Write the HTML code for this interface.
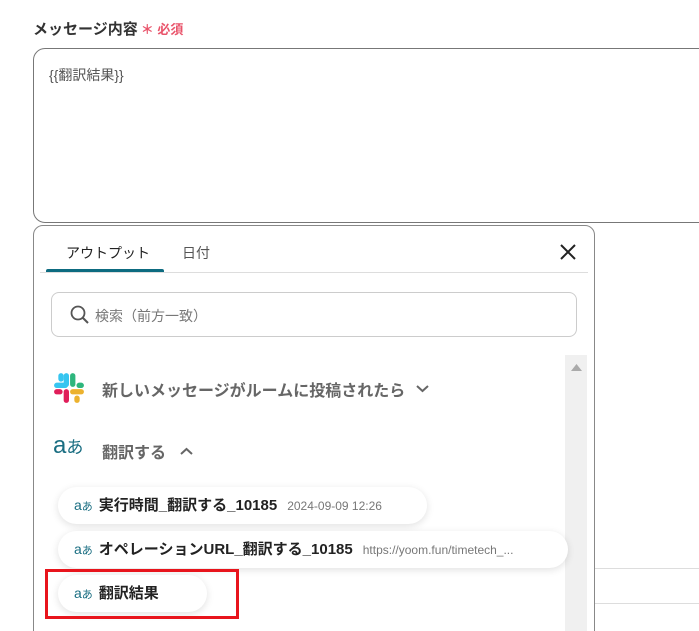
<!DOCTYPE html>
<html><head><meta charset="utf-8"><style>
*{box-sizing:border-box;margin:0;padding:0}
html,body{width:699px;height:631px;overflow:hidden}
body{background:#fff;font-family:"Liberation Sans","Noto Sans CJK JP",sans-serif;position:relative;color:#333}
.abs{position:absolute}
.lbl{left:33px;top:18px;font-size:15px;font-weight:bold;color:#333}
.lbl span{color:#e9546b;font-size:13px;margin-left:3px}
.ta{left:33px;top:48px;width:700px;height:175px;border:1px solid #777;border-radius:12px}
.ta div{position:absolute;left:15px;top:16px;font-size:14px;color:#555}
.pop{left:33px;top:225px;width:562px;height:420px;border:1px solid #888;border-radius:10px;background:#fff}
.tab{font-size:14px;top:243px}
.tl{left:46px;top:269px;width:118px;height:4px;background:#0d6b80;border-radius:2px 2px 0 0}
.div{left:40px;top:272px;width:548px;height:1px;background:#ddd}
.search{left:51px;top:292px;width:526px;height:45px;border:1px solid #ccc;border-radius:8px}
.search span{position:absolute;left:43px;top:13px;font-size:14px;color:#777}
.sb{left:565px;top:355px;width:22px;height:280px;background:#f0f0f0}
.row{font-size:16px;font-weight:bold;color:#666}
.chip{height:37px;border-radius:19px;background:#fff;box-shadow:0 2px 8px rgba(0,0,0,.12);font-size:15px;font-weight:bold;color:#222;padding-left:16px;line-height:37px;white-space:nowrap;overflow:hidden}
.ic{color:#1a6e82;font-weight:normal;font-size:14px;margin-right:6px}
.ic i{font-style:normal;font-size:11px}
.chip small{font-size:12px;color:#777;font-weight:normal;margin-left:10px}
</style></head><body>
<div class="abs lbl">メッセージ内容<span>＊ 必須</span></div>
<div class="abs ta"><div>{{翻訳結果}}</div></div>
<div class="abs" style="left:595px;top:568px;width:104px;height:1px;background:#ddd"></div>
<div class="abs" style="left:595px;top:603px;width:104px;height:1px;background:#ddd"></div>
<div class="abs pop"></div>
<div class="abs tab" style="left:66px;color:#222">アウトプット</div>
<div class="abs tab" style="left:182px;color:#555">日付</div>
<div class="abs tl"></div><div class="abs div"></div>
<svg class="abs" style="left:559px;top:243px" width="18" height="18" viewBox="0 0 18 18"><path d="M2 2L16 16M16 2L2 16" stroke="#222" stroke-width="2"/></svg>
<div class="abs search"><svg class="abs" style="left:18px;top:12px" width="20" height="20" viewBox="0 0 20 20"><circle cx="8" cy="8" r="6.5" fill="none" stroke="#555" stroke-width="1.8"/><path d="M13 13L18 18" stroke="#555" stroke-width="2"/></svg><span>検索（前方一致）</span></div>
<div class="abs sb"><svg class="abs" style="left:6px;top:9px" width="11" height="7"><path d="M0 7L5.5 0L11 7Z" fill="#aaa"/></svg></div>
<svg class="abs" style="left:53px;top:372px" width="32" height="32" viewBox="0 0 30 30">
<rect x="1" y="10" width="13" height="5" rx="2.5" fill="#36c5f0"/><rect x="5" y="1" width="5" height="8" rx="2.5" fill="#36c5f0"/>
<rect x="10" y="1" width="5" height="13" rx="2.5" fill="#36c5f0"/>
<rect x="16" y="1" width="5" height="13" rx="2.5" fill="#2eb67d"/><rect x="22" y="10" width="7" height="5" rx="2.5" fill="#2eb67d"/>
<rect x="16" y="16" width="13" height="5" rx="2.5" fill="#ecb22e"/><rect x="20" y="22" width="5" height="7" rx="2.5" fill="#ecb22e"/>
<rect x="10" y="16" width="5" height="13" rx="2.5" fill="#e01e5a"/><rect x="1" y="16" width="8" height="5" rx="2.5" fill="#e01e5a"/>
</svg>
<div class="abs row" style="left:102px;top:377px">新しいメッセージがルームに投稿されたら</div>
<svg class="abs" style="left:416px;top:385px" width="13" height="8"><path d="M1 1L6.5 6L12 1" fill="none" stroke="#666" stroke-width="2"/></svg>
<div class="abs" style="left:53px;top:433px;font-size:24px;color:#1a6e82;line-height:26px">a<span style="font-size:17px">あ</span></div>
<div class="abs row" style="left:102px;top:439px">翻訳する</div>
<svg class="abs" style="left:180px;top:447px" width="13" height="8"><path d="M1 7L6.5 2L12 7" fill="none" stroke="#666" stroke-width="2"/></svg>
<div class="abs chip" style="left:58px;top:487px;width:369px"><span class="ic">a<i>あ</i></span>実行時間_翻訳する_10185<small>2024-09-09 12:26</small></div>
<div class="abs chip" style="left:58px;top:531px;width:510px"><span class="ic">a<i>あ</i></span>オペレーションURL_翻訳する_10185<small>https://yoom.fun/timetech_...</small></div>
<div class="abs chip" style="left:58px;top:575px;width:149px"><span class="ic">a<i>あ</i></span>翻訳結果</div>
<div class="abs" style="left:45px;top:569px;width:194px;height:50px;border:3px solid #e8141c"></div>
</body></html>
